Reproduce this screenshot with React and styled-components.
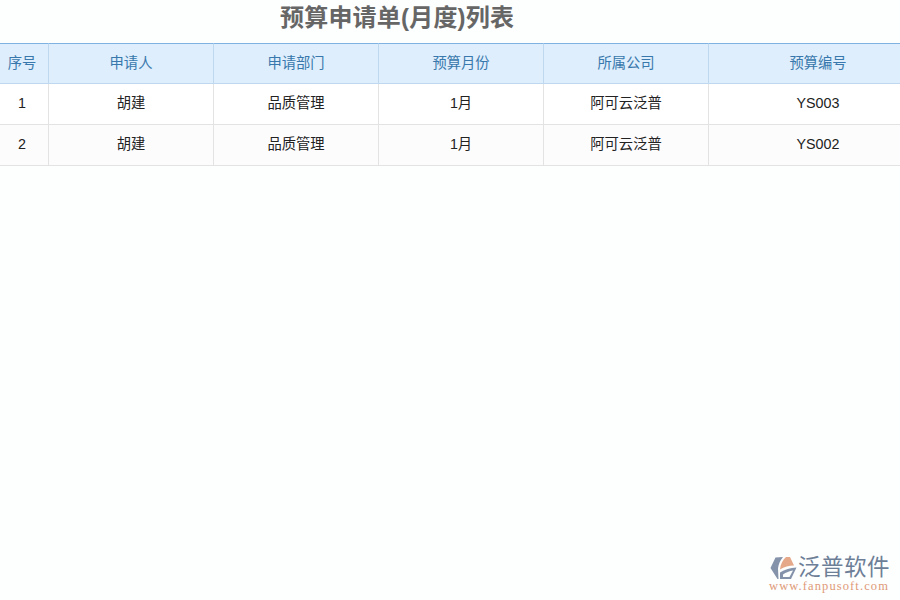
import React from "react";
import styled, { createGlobalStyle } from "styled-components";

const Global = createGlobalStyle`
  html, body { margin: 0; padding: 0; background: #fdfefe; }
  body { font-family: "Liberation Sans", "Noto Sans CJK SC", sans-serif; }
`;

const Page = styled.div`
  width: 900px;
  height: 600px;
  position: relative;
  overflow: hidden;
  background: #fdfefe;
`;

const Title = styled.h1`
  margin: 0;
  height: 43px;
  box-sizing: border-box;
  padding: 0 0 0 280px;
  font-size: 24px;
  line-height: 36px;
  letter-spacing: 0.2px;
  font-weight: 700;
  color: #666666;
  white-space: nowrap;
`;

const Table = styled.div`
  display: grid;
  width: 931px;
  margin-left: -4px;
  grid-template-columns: 53px 165px 165px 165px 165px 218px;
`;

const HeadCell = styled.div`
  height: 41px;
  box-sizing: border-box;
  display: flex;
  align-items: center;
  justify-content: center;
  padding-bottom: 2px;
  font-size: 14.3px;
  line-height: 20px;
  color: #3878ac;
  background: #deeefc;
  border-top: 1px solid #7fb2e0;
  border-bottom: 1px solid #bed8f0;
  border-right: ${p => (p.$last ? "0" : "1px solid #bed8f0")};
`;

const Cell = styled.div`
  height: 41px;
  box-sizing: border-box;
  display: flex;
  align-items: center;
  justify-content: center;
  padding-bottom: 2px;
  font-size: 14.3px;
  line-height: 20px;
  color: #222222;
  background: ${p => (p.$alt ? "#fdfcfd" : "#ffffff")};
  border-bottom: 1px solid #e3e3e3;
  border-right: ${p => (p.$last ? "0" : "1px solid #e3e3e3")};
`;

const Watermark = styled.div`
  position: absolute;
  left: 769px;
  top: 555px;
  width: 122px;
  display: grid;
  grid-template-columns: 29px 1fr;
  align-items: center;
`;

const BrandName = styled.div`
  font-size: 22.5px;
  line-height: 25px;
  letter-spacing: 0.5px;
  color: #6d7f97;
  white-space: nowrap;
`;

const BrandUrl = styled.div`
  grid-column: 1 / -1;
  font-family: "Liberation Serif", serif;
  font-size: 12.5px;
  line-height: 12px;
  letter-spacing: 1.1px;
  color: #e09a78;
  white-space: nowrap;
`;

const headers = ["序号", "申请人", "申请部门", "预算月份", "所属公司", "预算编号"];
const rows = [
  ["1", "胡建", "品质管理", "1月", "阿可云泛普", "YS003"],
  ["2", "胡建", "品质管理", "1月", "阿可云泛普", "YS002"],
];

function Logo() {
  return (
    <svg width="29" height="24" viewBox="0 0 29 24" aria-hidden="true">
      <path d="M6.5 1.5 L14 1 C11 4.5 9.5 8.5 9 12.5 L9.5 23 L8.5 23 L1.5 12 Z" fill="#8493aa" />
      <path d="M11 13.5 C11.5 8 14 3.5 17 1 L21 1 L25 9.5 C20 9.5 15 11 11 13.5 Z" fill="#e5a888" />
      <path d="M11 23 L11 16.5 C16 13.5 21 12 27.5 11.5 L22 23 Z" fill="#8493aa" />
      <path d="M14 21 L20.5 21 L24 14.5 C20.5 15 17 16.5 14 18.5 Z" fill="#fdfefe" />
    </svg>
  );
}

export default function App() {
  return (
    <Page>
      <Global />
      <Title>预算申请单(月度)列表</Title>
      <Table>
        {headers.map((h, i) => (
          <HeadCell key={h} $last={i === headers.length - 1}>{h}</HeadCell>
        ))}
        {rows.map((r, ri) =>
          r.map((c, ci) => (
            <Cell key={`${ri}-${ci}`} $alt={ri === 1} $last={ci === r.length - 1}>{c}</Cell>
          ))
        )}
      </Table>
      <Watermark>
        <Logo />
        <BrandName>泛普软件</BrandName>
        <BrandUrl>www.fanpusoft.com</BrandUrl>
      </Watermark>
    </Page>
  );
}
